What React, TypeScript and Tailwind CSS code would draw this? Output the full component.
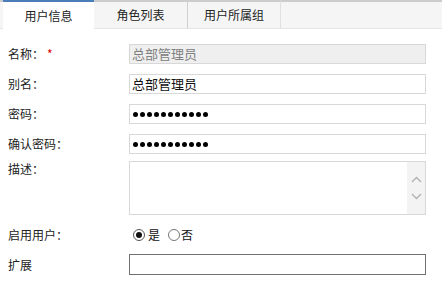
import React from "react";

const font = { fontFamily: '"Noto Sans CJK SC", "Noto Sans", sans-serif' };

function Dots() {
  return (
    <div className="flex items-center gap-[2px] pl-[3px]">
      {Array.from({ length: 11 }).map((_, i) => (
        <span key={i} className="block w-[5px] h-[5px] rounded-full bg-black" />
      ))}
    </div>
  );
}

function Label({ children, star }: { children: React.ReactNode; star?: boolean }) {
  return (
    <div className="w-[129px] pl-[8px] text-[12px] text-[#222] flex items-center">
      <span>{children}</span>
      {star && <span className="text-[#e00000] ml-[3px]">*</span>}
    </div>
  );
}

export default function App() {
  return (
    <div className="w-[442px] h-[292px] bg-white overflow-hidden" style={font}>
      {/* tab bar */}
      <div className="flex h-[29px] bg-[#f5f5f5]">
        <div className="w-[3px] border-t-2 border-[#cccccc] border-b border-b-[#e6e6e6]" />
        <div className="w-[91px] bg-white border-t-2 border-[#4a7ebb] flex items-center justify-center text-[12px] text-[#222]">
          用户信息
        </div>
        <div className="w-[94px] border-t-2 border-[#cccccc] border-b border-b-[#e6e6e6] border-r border-r-[#cfcfcf] flex items-center justify-center text-[12px] text-[#222]">
          角色列表
        </div>
        <div className="w-[93px] border-t-2 border-[#cccccc] border-b border-b-[#e6e6e6] border-r border-r-[#e0e0e0] flex items-center justify-center text-[12px] text-[#222]">
          用户所属组
        </div>
        <div className="flex-1 border-t-2 border-[#cccccc] border-b border-b-[#e6e6e6]" />
      </div>

      <div className="flex flex-col pt-[15px]">
        <div className="flex h-[20px]">
          <Label star>名称：</Label>
          <div className="w-[297px] h-[20px] border border-[#d8d8d8] bg-[#efefef] flex items-center pl-[2px] text-[13px] text-[#808080]">
            总部管理员
          </div>
        </div>
        <div className="flex h-[20px] mt-[10px]">
          <Label>别名：</Label>
          <div className="w-[297px] h-[20px] border border-[#d8d8d8] bg-white flex items-center pl-[2px] text-[13px] text-[#111]">
            总部管理员
          </div>
        </div>
        <div className="flex h-[20px] mt-[10px]">
          <Label>密码：</Label>
          <div className="w-[297px] h-[20px] border border-[#d8d8d8] bg-white flex items-center">
            <Dots />
          </div>
        </div>
        <div className="flex h-[20px] mt-[10px]">
          <Label>确认密码：</Label>
          <div className="w-[297px] h-[20px] border border-[#d8d8d8] bg-white flex items-center">
            <Dots />
          </div>
        </div>
        <div className="flex h-[54px] mt-[7px]">
          <div className="w-[129px] pl-[8px] text-[12px] text-[#222] leading-[14px] pt-[1px]">描述：</div>
          <div className="w-[297px] h-[54px] border border-[#d8d8d8] bg-white flex justify-end">
            <div className="w-[18px] h-full bg-[#f3f3f3] flex flex-col items-center justify-center gap-[10px]">
              <svg width="11" height="7" viewBox="0 0 11 7">
                <path d="M1 6 L5.5 1.5 L10 6" fill="none" stroke="#b0b0b0" strokeWidth="1.3" />
              </svg>
              <svg width="11" height="7" viewBox="0 0 11 7">
                <path d="M1 1 L5.5 5.5 L10 1" fill="none" stroke="#b0b0b0" strokeWidth="1.3" />
              </svg>
            </div>
          </div>
        </div>
        <div className="flex h-[20px] mt-[10px]">
          <Label>启用用户：</Label>
          <div className="flex items-center text-[12px] text-[#111] pl-[4px]">
            <span className="w-[12px] h-[12px] rounded-full border border-[#555] flex items-center justify-center bg-white">
              <span className="w-[6px] h-[6px] rounded-full bg-[#111]" />
            </span>
            <span className="ml-[3px]">是</span>
            <span className="ml-[8px] w-[12px] h-[12px] rounded-full border border-[#777] bg-white" />
            <span className="ml-[1px]">否</span>
          </div>
        </div>
        <div className="flex h-[21px] mt-[9px]">
          <Label>扩展</Label>
          <div className="w-[297px] h-[21px] border border-[#707070] bg-white" />
        </div>
      </div>
    </div>
  );
}
